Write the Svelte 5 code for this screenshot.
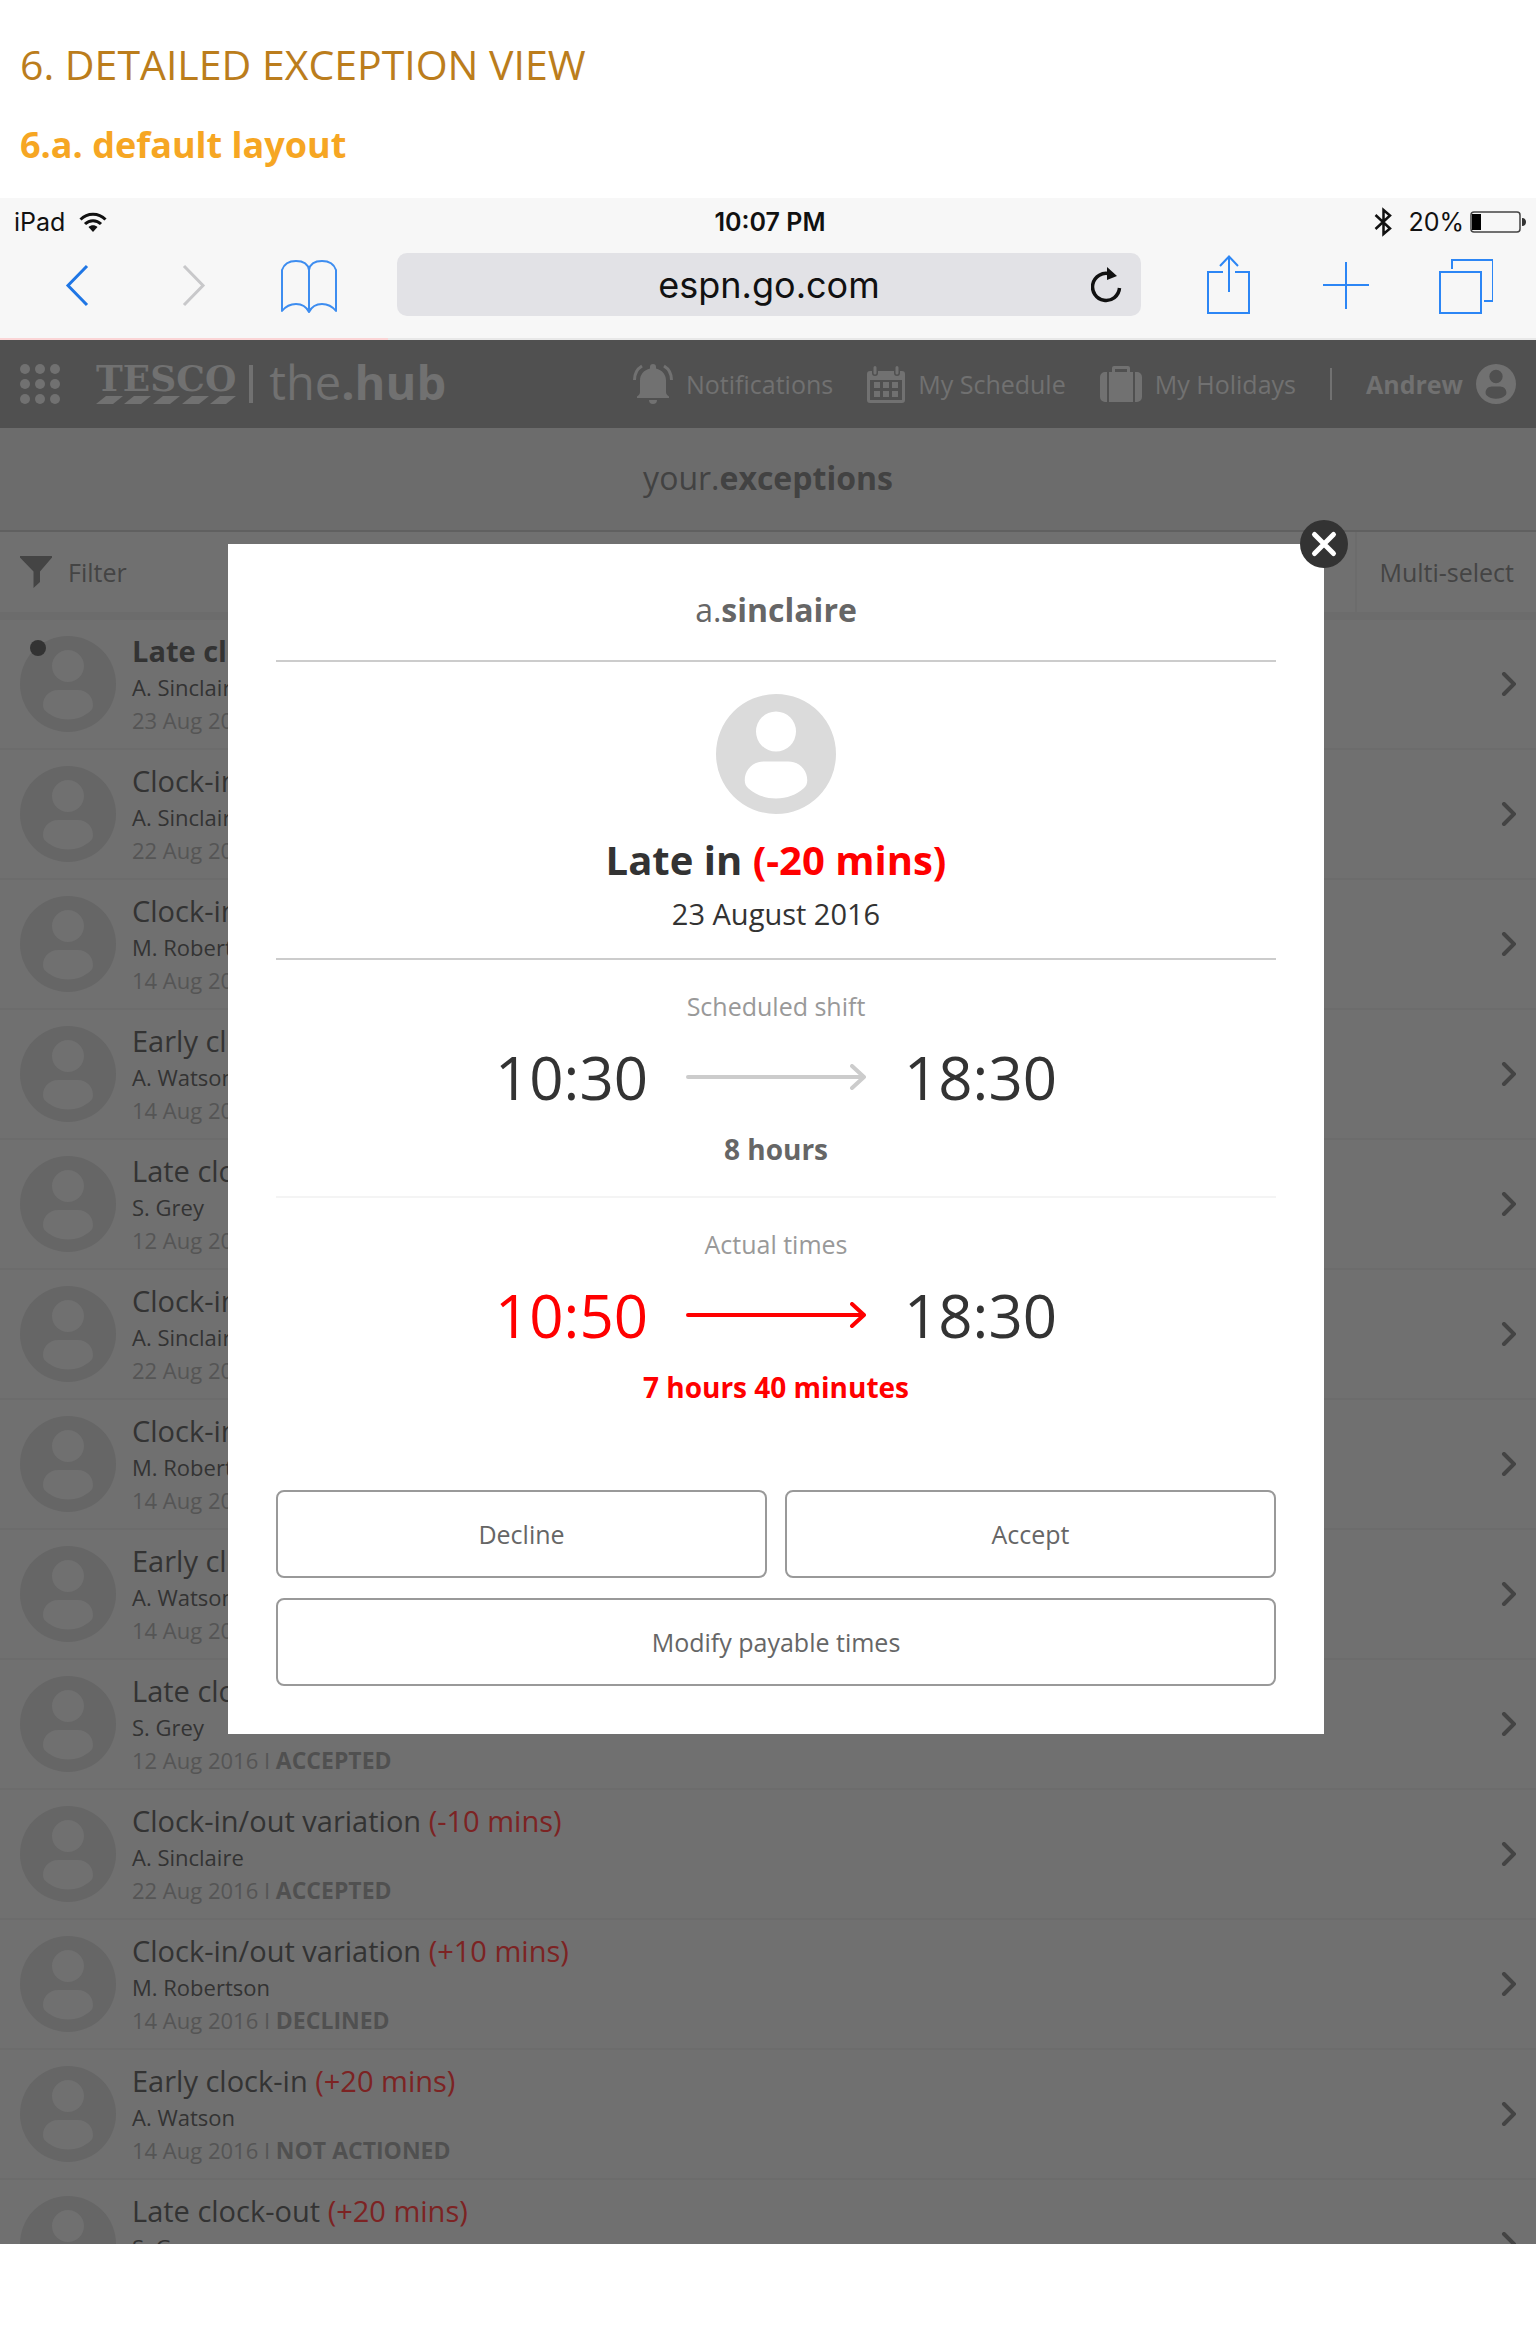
<script>
  const rows = [
    { kind: 'Late clock-in', diff: '(-20 mins)', name: 'A. Sinclaire', date: '23 Aug 2016', status: 'NEW', unread: true },
    { kind: 'Clock-in/out variation', diff: '(-10 mins)', name: 'A. Sinclaire', date: '22 Aug 2016', status: 'NEW' },
    { kind: 'Clock-in/out variation', diff: '(+10 mins)', name: 'M. Robertson', date: '14 Aug 2016', status: 'NEW' },
    { kind: 'Early clock-in', diff: '(+20 mins)', name: 'A. Watson', date: '14 Aug 2016', status: 'NEW' },
    { kind: 'Late clock-out', diff: '(+20 mins)', name: 'S. Grey', date: '12 Aug 2016', status: 'ACCEPTED' },
    { kind: 'Clock-in/out variation', diff: '(-10 mins)', name: 'A. Sinclaire', date: '22 Aug 2016', status: 'ACCEPTED' },
    { kind: 'Clock-in/out variation', diff: '(+10 mins)', name: 'M. Robertson', date: '14 Aug 2016', status: 'DECLINED' },
    { kind: 'Early clock-in', diff: '(+20 mins)', name: 'A. Watson', date: '14 Aug 2016', status: 'NOT ACTIONED' },
    { kind: 'Late clock-out', diff: '(+20 mins)', name: 'S. Grey', date: '12 Aug 2016', status: 'ACCEPTED' },
    { kind: 'Clock-in/out variation', diff: '(-10 mins)', name: 'A. Sinclaire', date: '22 Aug 2016', status: 'ACCEPTED' },
    { kind: 'Clock-in/out variation', diff: '(+10 mins)', name: 'M. Robertson', date: '14 Aug 2016', status: 'DECLINED' },
    { kind: 'Early clock-in', diff: '(+20 mins)', name: 'A. Watson', date: '14 Aug 2016', status: 'NOT ACTIONED' },
    { kind: 'Late clock-out', diff: '(+20 mins)', name: 'S. Grey', date: '12 Aug 2016', status: 'ACCEPTED' }
  ];

  const shifts = [
    { label: 'Scheduled shift', start: '10:30', end: '18:30', total: '8 hours', late: false },
    { label: 'Actual times', start: '10:50', end: '18:30', total: '7 hours 40 minutes', late: true }
  ];

  const dots = [5, 20, 35];
</script>

{#snippet person(cls)}
  <svg class={cls} viewBox="0 0 96 96" aria-hidden="true">
    <path
      fill="currentColor"
      fill-rule="evenodd"
      d="M48 0a48 48 0 1 1 0 96a48 48 0 0 1 0-96zM48 14a16 16 0 1 0 0 32a16 16 0 0 0 0-32zM38 54c-9 0-15 7-15 15c0 3 1 5 3 6.500c6 5 13 8 22 8s16-3 22-8c2-1.500 3-3.500 3-6.500c0-8-6-15-15-15z"
    />
  </svg>
{/snippet}

<header class="doc">
  <h1>6. DETAILED EXCEPTION VIEW</h1>
  <h2>6.a. default layout</h2>
</header>

<section class="chrome" aria-label="Browser">
  <div class="status">
    <span class="device">
      iPad
      <svg width="28" height="20" viewBox="0 0 28 20" aria-hidden="true">
        <g fill="none" stroke="#111" stroke-width="3">
          <path d="M1.500 7.500C8.500 .5 19.500 .5 26.500 7.500" />
          <path d="M6 12C10.500 7.500 17.500 7.500 22 12" />
        </g>
        <path d="M9.500 15c2.500-2.500 6.500-2.500 9 0L14 20z" fill="#111" />
      </svg>
    </span>
    <strong>10:07 PM</strong>
    <span class="power">
      <svg class="bt" width="18" height="30" viewBox="0 0 18 30" aria-hidden="true">
        <path d="M1.500 8L16 21.500L9.500 27V3l6.500 5.500L1.500 22" fill="none" stroke="#111" stroke-width="2.500" />
      </svg>
      20%
      <svg width="56" height="22" viewBox="0 0 56 22" aria-hidden="true">
        <rect x="1" y="1" width="49" height="20" rx="3" fill="none" stroke="#444" stroke-width="1.500" />
        <rect x="2" y="3" width="9" height="16" fill="#000" />
        <path d="M52 7c3 0 4 2 4 4s-1 4-4 4z" fill="#333" />
      </svg>
    </span>
  </div>
  <div class="toolbar">
    <button aria-label="Back">
      <svg width="56" height="60" viewBox="0 0 56 60"><path d="M38 11L19 30.500L38 50" fill="none" stroke="#1f76e5" stroke-width="3" /></svg>
    </button>
    <button aria-label="Forward">
      <svg width="56" height="60" viewBox="0 0 56 60"><path d="M19 11L38 30.500L19 50" fill="none" stroke="#c8c8ca" stroke-width="3" /></svg>
    </button>
    <button aria-label="Bookmarks">
      <svg width="56" height="60" viewBox="0 0 56 60">
        <path
          d="M28 57V15C27 9 22 6 15 6S3 9 1 15V56C5 51 10 49 15 49S25 51 28 57C31 51 36 49 41 49S51 51 55 56V15C53 9 48 6 41 6S29 9 28 15"
          fill="none" stroke="#3d8df0" stroke-width="2" stroke-linejoin="round"
        />
      </svg>
    </button>
    <div class="url">
      <input type="text" value="espn.go.com" aria-label="Address" />
      <button class="reload" aria-label="Reload">
        <svg width="32" height="36" viewBox="0 0 32 36">
          <path d="M19 7A13.500 13.500 0 1 0 28.500 21" fill="none" stroke="#111" stroke-width="3.500" />
          <path d="M16 0L26 9L16 13z" fill="#111" />
        </svg>
      </button>
    </div>
    <div class="tools">
      <button aria-label="Share">
        <svg width="56" height="60" viewBox="0 0 56 60" fill="none" stroke="#2c86f5" stroke-width="2">
          <path d="M22 17H7V58H48V17H34M28 37V2M19 11L28 1.500L37 11" />
        </svg>
      </button>
      <button aria-label="New tab">
        <svg width="56" height="60" viewBox="0 0 56 60" fill="none" stroke="#2c86f5" stroke-width="2"><path d="M27 7V54M4 30H50" /></svg>
      </button>
      <button aria-label="Show tabs">
        <svg width="56" height="60" viewBox="0 0 56 60" fill="none" stroke="#2c86f5" stroke-width="2">
          <path d="M3 17H44V58H3zM15 14V5H56V46H47" />
        </svg>
      </button>
    </div>
  </div>
  <div class="progress"></div>
</section>

<main class="screen">
  <div class="app">
    <nav class="hub">
      <button aria-label="Apps">
        <svg width="40" height="40" viewBox="0 0 40 40" fill="currentColor">
          {#each dots as y}{#each dots as x}<circle cx={x} cy={y} r="5" />{/each}{/each}
        </svg>
      </button>
      <a class="brand" href="#home">
        <span class="tesco">
          <span class="word">TESCO</span>
          <svg width="140" height="8" viewBox="0 0 140 8" fill="currentColor" aria-hidden="true">
            <path d="M10 0H27L17 8H0zM38 0H55L45 8H28zM67 0H84L74 8H57zM96 0H113L103 8H86zM124 0H140L130 8H114z" />
          </svg>
        </span>
        <span class="bar"></span>
        <span class="thehub">the<b>.hub</b></span>
      </a>
      <div class="links">
        <a href="#notifications">
          <svg width="40" height="40" viewBox="0 0 40 40" fill="currentColor">
            <path d="M20 0a3 3 0 0 1 3 3v1.500c6 1.500 10 6 10 12V28c0 2 1 3 3 4.500V34H4v-1.500C6 31 7 30 7 28V16.500c0-6 4-10.500 10-12V3a3 3 0 0 1 3-3zM16 36h8a4 4 0 0 1-8 0z" />
            <path d="M9 2C4 5 1.500 10 1.500 16M31 2c5 3 7.500 8 7.500 14" fill="none" stroke="currentColor" stroke-width="3" />
          </svg>
          Notifications
        </a>
        <a href="#schedule">
          <svg width="38" height="37" viewBox="0 0 38 37">
            <path
              fill="currentColor" fill-rule="evenodd"
              d="M3 5H5V7a3 3 0 0 0 6 0V5H27V7a3 3 0 0 0 6 0V5H35a3 3 0 0 1 3 3V34a3 3 0 0 1-3 3H3a3 3 0 0 1-3-3V8a3 3 0 0 1 3-3zM3 14V34H35V14z"
            />
            <path
              fill="currentColor"
              d="M6.500 1.500a1.500 1.500 0 0 1 3 0V7a1.500 1.500 0 0 1-3 0zM28.500 1.500a1.500 1.500 0 0 1 3 0V7a1.500 1.500 0 0 1-3 0zM7 16h6v6H7zM16 16h6v6h-6zM25 16h6v6h-6zM7 25h6v6H7zM16 25h6v6h-6zM25 25h6v6h-6z"
            />
          </svg>
          My Schedule
        </a>
        <a href="#holidays">
          <svg width="42" height="36" viewBox="0 0 42 36" fill="currentColor">
            <path d="M7 6V36H5a5 5 0 0 1-5-5V11a5 5 0 0 1 5-5zM35 6h2a5 5 0 0 1 5 5V31a5 5 0 0 1-5 5h-2z" />
            <path fill-rule="evenodd" d="M9 6h3V2a2 2 0 0 1 2-2H28a2 2 0 0 1 2 2V6h3V36H9zM15 3V6H27V3z" />
          </svg>
          My Holidays
        </a>
        <span class="sep"></span>
        <a class="user" href="#account">Andrew {@render person('me')}</a>
      </div>
    </nav>

    <h2 class="pagetitle"><span>your.</span>exceptions</h2>

    <div class="filters">
      <button class="filter">
        <svg width="32" height="32" viewBox="0 0 32 32" fill="currentColor">
          <path d="M1 0H31a1 1 0 0 1 .8 1.800L20 15.500V26l-6.500 6V15.500L.2 1.800A1 1 0 0 1 1 0z" />
        </svg>
        Filter
      </button>
      <button class="multi">Multi-select</button>
    </div>

    <ul class="list">
      {#each rows as row}
        <li>
          <a class="row" class:unread={row.unread} href="#exception">
            <span class="face">
              {@render person('avatar')}
            </span>
            <span class="info">
              <span class="kind">{row.kind} <span class="diff">{row.diff}</span></span>
              <span class="name">{row.name}</span>
              <span class="date">{row.date} I <b>{row.status}</b></span>
            </span>
            <svg class="go" width="16" height="24" viewBox="0 0 16 24" aria-hidden="true">
              <path d="M4 2L14 12L4 22" fill="none" stroke="currentColor" stroke-width="4" stroke-linecap="round" />
            </svg>
          </a>
        </li>
      {/each}
    </ul>
  </div>

  <div class="overlay">
    <div class="modal" role="dialog" aria-modal="true" aria-labelledby="who">
      <button class="close" aria-label="Close">
        <svg width="48" height="48" viewBox="0 0 48 48">
          <circle cx="24" cy="24" r="24" fill="#333" />
          <path d="M14.500 14.500L33.500 33.500M33.500 14.500L14.500 33.500" stroke="#fff" stroke-width="5" stroke-linecap="round" />
        </svg>
      </button>
      <h3 id="who"><span>a.</span>sinclaire</h3>
      <div class="summary">
        {@render person('portrait')}
        <p class="what">Late in <em>(-20 mins)</em></p>
        <p class="when">23 August 2016</p>
      </div>
      {#each shifts as shift}
        <section class="shift" class:late={shift.late}>
          <p class="label">{shift.label}</p>
          <div class="times">
            <span class="start">{shift.start}</span>
            <svg width="180" height="26" viewBox="0 0 180 26" aria-hidden="true">
              <path d="M2 13H178M166 2L178 13L166 24" fill="none" stroke="currentColor" stroke-width="4" stroke-linecap="round" stroke-linejoin="round" />
            </svg>
            <span>{shift.end}</span>
          </div>
          <p class="total">{shift.total}</p>
        </section>
      {/each}
      <div class="actions">
        <button>Decline</button>
        <button>Accept</button>
        <button class="wide">Modify payable times</button>
      </div>
    </div>
  </div>
</main>

<style>
  :global(body) {
    margin: 0;
    background: #fff;
    font-family: 'Open Sans', 'Noto Sans', sans-serif;
  }
  h1, h2, h3, p, ul {
    margin: 0;
    padding: 0;
  }
  ul {
    list-style: none;
  }
  button {
    border: 0;
    padding: 0;
    background: none;
    color: inherit;
    font: inherit;
  }
  a {
    color: inherit;
    text-decoration: none;
  }
  svg {
    display: block;
    flex: none;
  }

  .doc {
    display: flex;
    flex-direction: column;
    gap: 29px;
    padding: 36px 20px 29px;
  }
  .doc h1 {
    color: #bb7d1c;
    font-size: 41px;
    font-weight: 400;
    line-height: 56px;
  }
  .doc h2 {
    color: #f6a623;
    font-size: 36px;
    font-weight: 700;
    line-height: 48px;
  }

  .chrome {
    background: #f7f7f7;
    color: #111;
    font-family: Inter, 'Liberation Sans', sans-serif;
  }
  .status {
    display: grid;
    grid-template-columns: 1fr auto 1fr;
    align-items: center;
    padding: 8px 10px 0 14px;
    font-size: 25px;
    line-height: 32px;
  }
  .status strong {
    font-weight: 600;
  }
  .device, .power {
    display: flex;
    align-items: center;
    gap: 14px;
  }
  .power {
    justify-content: flex-end;
    gap: 6px;
  }
  .bt {
    margin-right: 10px;
  }
  .toolbar {
    display: flex;
    align-items: center;
    gap: 60px;
    padding: 15px 43px 22px 49px;
  }
  .tools {
    display: flex;
    gap: 62px;
  }
  .url {
    display: flex;
    flex: 1;
    align-items: center;
    padding: 0 18px 0 50px;
    border-radius: 10px;
    background: #e2e2e6;
  }
  .url input {
    flex: 1;
    min-width: 0;
    height: 63px;
    padding: 0;
    border: 0;
    background: none;
    color: #111;
    font: inherit;
    font-size: 36px;
    text-align: center;
  }
  .progress {
    height: 2px;
    background: linear-gradient(90deg, #fbd5d6 388px, #e8e8e8 388px);
  }

  .screen {
    position: relative;
    margin-bottom: 88px;
    background: #707070;
  }
  .hub {
    display: flex;
    align-items: center;
    height: 88px;
    padding: 0 20px;
    background: #505050;
    color: #717171;
    font-size: 25px;
  }
  .hub button {
    margin-right: 36px;
  }
  .brand, .links, .links a {
    display: flex;
    align-items: center;
  }
  .tesco {
    display: flex;
    flex-direction: column;
    gap: 4px;
  }
  .word {
    font-family: 'DejaVu Serif', serif;
    font-size: 36px;
    font-weight: 700;
    line-height: 28px;
  }
  .bar {
    width: 4px;
    height: 38px;
    margin: 0 16px 0 13px;
    background: currentColor;
  }
  .thehub {
    font-size: 47px;
    line-height: 52px;
    padding-bottom: 4px;
  }
  .links {
    gap: 34px;
    margin-left: auto;
    white-space: nowrap;
  }
  .links a {
    gap: 13px;
  }
  .sep {
    width: 2px;
    height: 32px;
    background: currentColor;
  }
  .links .user {
    font-weight: 700;
  }
  .hub :global(.me) {
    width: 40px;
    height: 40px;
  }

  .pagetitle {
    padding: 26px 0 28px;
    border-bottom: 2px solid #606060;
    background: #6c6c6c;
    color: #424242;
    font-size: 32px;
    font-weight: 700;
    line-height: 48px;
    text-align: center;
  }
  .pagetitle span, h3 span {
    font-weight: 400;
  }

  .filters {
    display: flex;
    justify-content: space-between;
    border-bottom: 8px solid #6c6c6c;
    color: #444;
    font-size: 25px;
  }
  .filters button {
    display: flex;
    align-items: center;
    gap: 16px;
    height: 80px;
    padding: 0 20px;
  }
  .filters .multi {
    padding: 0 22px;
    border-left: 2px solid #6c6c6c;
  }

  .list {
    max-height: 1624px;
    overflow: hidden;
  }
  .row {
    display: flex;
    align-items: center;
    gap: 16px;
    padding: 12px 20px;
    border-bottom: 2px solid #6c6c6c;
    color: #333;
  }
  .face {
    position: relative;
    color: #666;
  }
  .row :global(.avatar) {
    width: 96px;
    height: 96px;
  }
  .unread .face::after {
    content: '';
    position: absolute;
    top: 4px;
    left: 10px;
    width: 16px;
    height: 16px;
    border-radius: 50%;
    background: #333;
  }
  .info {
    display: flex;
    flex: 1;
    flex-direction: column;
    padding-top: 2px;
    font-size: 22px;
    line-height: 34px;
    white-space: nowrap;
  }
  .kind {
    margin-bottom: 2px;
    font-size: 29px;
  }
  .unread .kind {
    font-weight: 700;
  }
  .diff {
    color: #7c2323;
  }
  .date {
    color: #555;
    line-height: 32px;
  }
  .date b {
    color: #505050;
    font-size: 23px;
  }
  .go {
    color: #444;
  }

  .overlay {
    position: absolute;
    inset: 0;
    display: flex;
    align-items: flex-start;
    justify-content: center;
    padding: 204px 0 0 16px;
  }
  .modal {
    position: relative;
    box-sizing: border-box;
    width: 1096px;
    max-width: 90%;
    padding: 44px 48px 48px;
    background: #fff;
    color: #333;
    text-align: center;
  }
  .close {
    position: absolute;
    top: -24px;
    right: -24px;
  }
  h3 {
    padding-bottom: 28px;
    border-bottom: 2px solid #ccc;
    color: #666;
    font-size: 32px;
    font-weight: 700;
    line-height: 44px;
  }
  .summary {
    display: flex;
    flex-direction: column;
    align-items: center;
    padding: 32px 0 24px;
    border-bottom: 2px solid #ccc;
  }
  .summary :global(.portrait) {
    width: 120px;
    height: 120px;
    color: #dbdbdb;
  }
  .what {
    margin: 18px 0 6px;
    font-size: 40px;
    font-weight: 700;
    line-height: 56px;
  }
  .what em {
    color: #f00;
    font-style: normal;
  }
  .when {
    font-size: 29px;
    line-height: 40px;
  }
  .shift {
    padding: 28px 0 27px;
  }
  .shift + .shift {
    border-top: 2px solid #f4f4f4;
  }
  .label {
    color: #999;
    font-size: 25px;
    line-height: 36px;
  }
  .times {
    display: flex;
    align-items: center;
    justify-content: center;
    gap: 38px;
    margin: 13px 0 12px;
    font-size: 60px;
    line-height: 80px;
  }
  .times svg {
    color: #ccc;
  }
  .total {
    color: #666;
    font-size: 28px;
    font-weight: 700;
    line-height: 40px;
  }
  .late .start, .late svg, .late .total {
    color: #f00;
  }
  .actions {
    display: grid;
    grid-template-columns: 1fr 1fr;
    gap: 20px 18px;
    margin-top: 56px;
  }
  .actions button {
    height: 88px;
    border: 2px solid #999;
    border-radius: 8px;
    color: #666;
    font-size: 25px;
  }
  .actions .wide {
    grid-column: span 2;
  }
</style>
